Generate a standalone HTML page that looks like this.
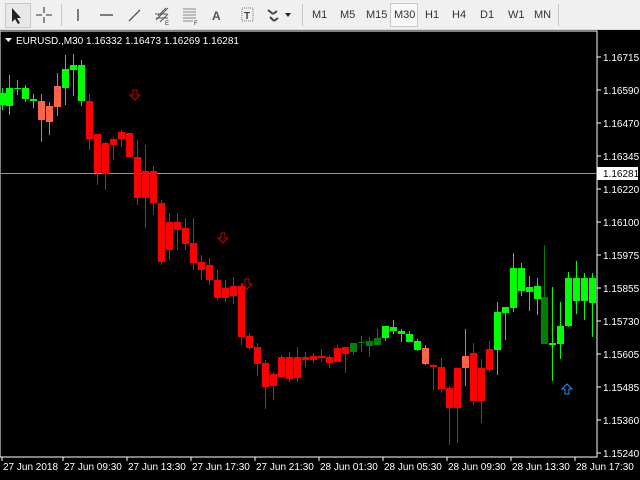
<!DOCTYPE html>
<html><head><meta charset="utf-8"><style>
html,body{margin:0;padding:0;width:640px;height:480px;overflow:hidden;background:#000;font-family:"Liberation Sans",Tahoma,sans-serif}
#tb{position:absolute;left:0;top:0;width:640px;height:29px;background:#f0f0f0;border-bottom:1px solid #d8d8d8}
.tf{position:absolute;top:9px;font-size:11px;color:#333}
.sep{position:absolute;top:4px;width:1px;height:22px;background:#c8c8c8}
</style></head><body>
<div id="tb">
<div style="position:absolute;left:5px;top:3px;width:24px;height:23px;border:1px solid #c8c8c8;background:#e8e8e8"></div>
<svg width="640" height="29" style="position:absolute;left:0;top:0">
<path d="M12 8 L12 22 L15 19 L18 24 L20 23 L17 18 L21 18 Z" fill="#222"/>
<path d="M44 7v6M44 17v6M36 15h6M46 15h6" stroke="#555" stroke-width="1.3"/>
<line x1="78" y1="9" x2="78" y2="21" stroke="#555" stroke-width="1.5"/>
<line x1="100" y1="15" x2="113" y2="15" stroke="#555" stroke-width="1.5"/>
<line x1="129" y1="21" x2="140" y2="10" stroke="#555" stroke-width="1.3"/>
<path d="M156 20l12-12M158 16l8-8M160 22l8-8M155 14h12M156 18h12" stroke="#555" stroke-width="1"/>
<text x="165" y="25" font-size="6" fill="#333">E</text>
<path d="M183 9h13M183 12h13M183 15h13M183 18h13M183 21h10" stroke="#666" stroke-width="0.8"/>
<text x="194" y="25" font-size="6" fill="#333">F</text>
<text x="212" y="20" font-size="12" font-weight="bold" fill="#555">A</text>
<rect x="242" y="8" width="11" height="13" fill="none" stroke="#777" stroke-dasharray="1,1"/>
<text x="244" y="19" font-size="10" font-weight="bold" fill="#444">T</text>
<path d="M268 10l5 4M273 14l4-3M270 17l4 4M274 21l4-3" stroke="#444" stroke-width="2"/>
<path d="M285 13h6l-3 4z" fill="#222"/>
</svg>
<div class="sep" style="left:61px"></div>
<div class="sep" style="left:302px"></div>
<div class="sep" style="left:558px"></div>
<div style="position:absolute;left:390px;top:3px;width:26px;height:22px;border:1px solid #c8c8c8;background:#f8f8f8"></div>
<span class="tf" style="left:312px">M1</span><span class="tf" style="left:340px">M5</span><span class="tf" style="left:366px">M15</span><span class="tf" style="left:394px">M30</span><span class="tf" style="left:425px">H1</span><span class="tf" style="left:452px">H4</span><span class="tf" style="left:480px">D1</span><span class="tf" style="left:508px">W1</span><span class="tf" style="left:534px">MN</span>
</div>
<svg id="ch" width="640" height="451" style="position:absolute;left:0;top:29px" font-family="Liberation Sans, Tahoma, sans-serif" font-size="10"></svg>
<script>
var s=document.getElementById('ch'),h='';
var O=-29;
function y(v){return v+O}
h+='<rect x="0" y="'+y(31)+'" width="597" height="426" fill="none" stroke="#fff" stroke-width="1"/>';
h+='<text x="16" y="'+y(44)+'" fill="#fff" font-size="10">EURUSD.,M30  1.16332 1.16473 1.16269 1.16281</text>';
h+='<path d="M5 '+y(38)+'h7l-3.5 4z" fill="#fff"/>';
h+='<line x1="0" y1="'+y(173.5)+'" x2="597" y2="'+y(173.5)+'" stroke="#8c96a0" stroke-width="1"/>';
var lab=['1.16715','1.16590','1.16470','1.16345','1.16220','1.16100','1.15975','1.15855','1.15730','1.15605','1.15485','1.15360','1.15240'];
for(var i=0;i<13;i++){var yy=57+i*33;h+='<line x1="597" x2="601" y1="'+y(yy)+'" y2="'+y(yy)+'" stroke="#fff"/>';h+='<text x="603" y="'+y(yy+4)+'" fill="#fff">'+lab[i]+'</text>';}
h+='<rect x="597" y="'+y(167)+'" width="41" height="13" fill="#fff"/><text x="603" y="'+y(177)+'" fill="#000">1.16281</text>';
var tl=[[2,'27 Jun 2018'],[63,'27 Jun 09:30'],[127,'27 Jun 13:30'],[191,'27 Jun 17:30'],[255,'27 Jun 21:30'],[319,'28 Jun 01:30'],[383,'28 Jun 05:30'],[447,'28 Jun 09:30'],[511,'28 Jun 13:30'],[575,'28 Jun 17:30']];
tl.forEach(function(t){h+='<line x1="'+t[0]+'" x2="'+t[0]+'" y1="'+y(457)+'" y2="'+y(461)+'" stroke="#fff"/>';h+='<text x="'+(t[0]+1)+'" y="'+y(470)+'" fill="#fff">'+t[1]+'</text>';});
var G='#00ff00',R='#ff0000',S='#ff6347',D='#008000';
var c=[
[2,93,105,88,110,G],[9,88,106,75,115,G],[17,88,89,80,95,G],[25,88,99,85,102,G],[33,99,101,94,108,G],[41,101,120,94,142,S],[49,106,122,102,135,S],[57,86,107,73,116,S],[65,69,88,55,105,G],[73,65,70,54,96,G],[81,65,101,60,106,G],
[89,101,139,94,150,R],[97,134,173,134,185,R],[105,143,174,142,190,R],[113,139,145,137,160,R],[121,132,139,130,147,R],[129,133,157,133,157,R],[137,157,198,140,205,R],[145,171,198,145,228,R],[153,171,203,166,215,R],[161,203,262,200,265,R],[169,222,250,213,260,R],[177,222,230,213,250,R],[185,228,244,218,250,R],[193,243,263,218,270,R],
[201,262,270,255,280,R],[209,265,280,258,285,R],[217,280,298,270,300,R],[225,288,298,280,302,R],[233,286,296,277,304,R],[241,286,337,283,345,R],[249,336,348,333,350,R],[257,347,364,343,376,R],[265,363,387,360,409,R],[273,374,386,372,400,R],[281,357,377,355,378,R],[289,357,379,352,382,R],[297,357,378,347,382,R],[305,357,360,352,367,R],[313,356,360,353,363,R],[321,356,358,349,362,R],[329,357,363,355,368,R],[337,348,362,345,362,R],[345,347,354,347,373,R],
[353,343,352,343,355,D],[361,342,343,336,352,D],[369,341,346,337,357,D],[377,338,345,329,345,D],[385,326,338,326,341,G],[393,327,331,320,334,G],[401,331,334,329,342,G],[409,334,342,331,342,G],[417,341,350,339,351,G],[425,348,364,345,365,S],[433,365,367,364,390,R],[441,367,389,358,393,R],[449,388,408,386,445,R],[457,368,408,368,443,R],[465,356,368,329,386,S],[473,353,401,343,405,R],[481,368,401,359,423,R],[489,349,370,341,372,R],[497,312,350,302,375,G],
[505,307,313,307,340,G],[513,268,308,253,312,G],[521,268,291,263,296,G],[529,287,292,276,311,G],[537,286,299,278,315,G],[544,297,344,245,344,D],[552,343,345,287,381,G],[560,326,344,302,359,G],[568,278,326,272,327,G],[576,278,301,261,314,G],[584,278,301,273,320,G],[592,278,303,273,337,G]];
c.forEach(function(k){var x=k[0];h+='<line x1="'+(x+0.5)+'" x2="'+(x+0.5)+'" y1="'+y(k[3])+'" y2="'+y(k[4])+'" stroke="'+k[5]+'" stroke-width="1"/>';h+='<rect x="'+(x-3)+'" y="'+y(k[1])+'" width="7" height="'+Math.max(1,k[2]-k[1])+'" fill="'+k[5]+'"/>';});
function da(x,yy){return '<path d="M'+(x-2)+' '+y(yy-5)+'h4v5h3l-5 5l-5-5h3z" fill="none" stroke="#c00" stroke-width="1"/>'}
h+=da(135,95)+da(223,238)+da(247,284);
h+='<path d="M565 '+y(394)+'v-5h-3l5-5l5 5h-3v5z" fill="none" stroke="#1e90ff" stroke-width="1"/>';
s.innerHTML=h;
</script>
</body></html>
